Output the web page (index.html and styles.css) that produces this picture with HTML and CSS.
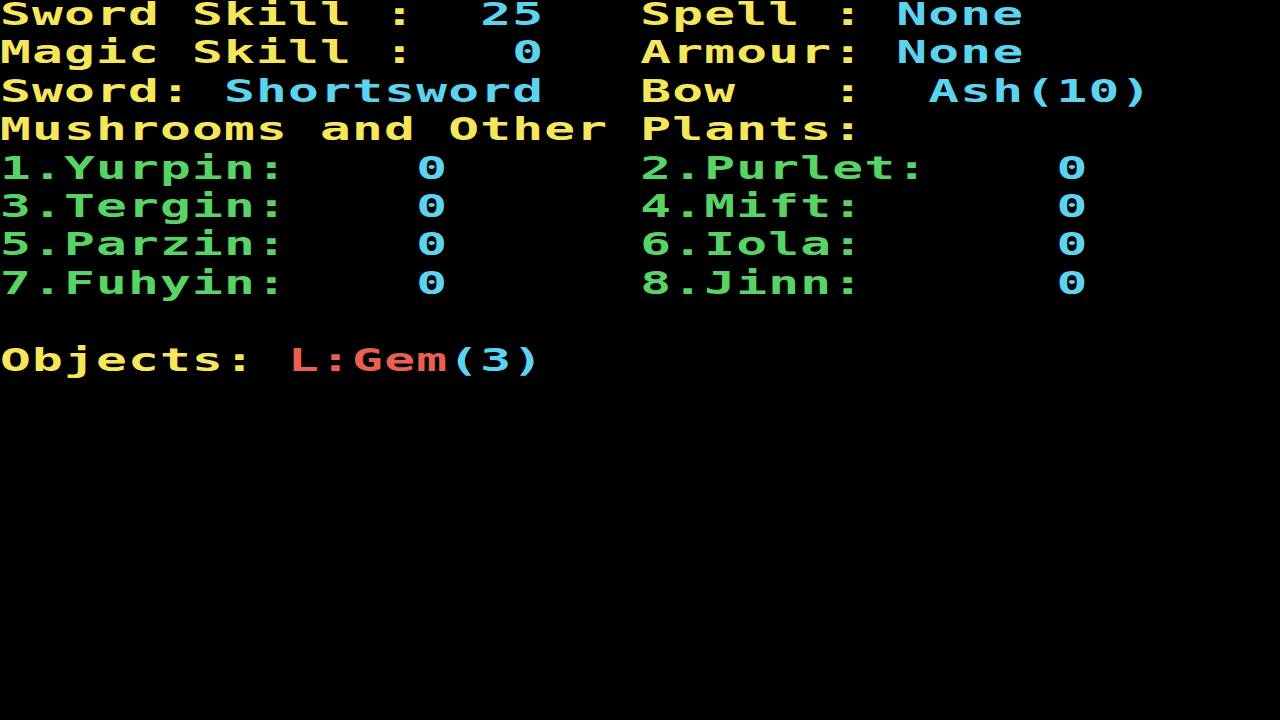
FILE: index.html
```html
<!DOCTYPE html>
<html>
<head>
<meta charset="utf-8">
<link rel="stylesheet" href="styles.css">
</head>
<body>
<div class="screen">
<div class="line"><span class="y">Sword Skill :</span>  <span class="c">25</span>   <span class="y">Spell :</span> <span class="c">None</span></div>
<div class="line"><span class="y">Magic Skill :</span>   <span class="c">0</span>   <span class="y">Armour:</span> <span class="c">None</span></div>
<div class="line"><span class="y">Sword:</span> <span class="c">Shortsword</span>   <span class="y">Bow   :</span>  <span class="c">Ash(10)</span></div>
<div class="line"><span class="y">Mushrooms and Other Plants:</span></div>
<div class="line"><span class="g">1.Yurpin:</span>    <span class="c">0</span>      <span class="g">2.Purlet:</span>    <span class="c">0</span></div>
<div class="line"><span class="g">3.Tergin:</span>    <span class="c">0</span>      <span class="g">4.Mift:</span>      <span class="c">0</span></div>
<div class="line"><span class="g">5.Parzin:</span>    <span class="c">0</span>      <span class="g">6.Iola:</span>      <span class="c">0</span></div>
<div class="line"><span class="g">7.Fuhyin:</span>    <span class="c">0</span>      <span class="g">8.Jinn:</span>      <span class="c">0</span></div>
<div class="line"> </div>
<div class="line"><span class="y">Objects:</span> <span class="r">L:Gem</span><span class="c">(3)</span></div>
</div>
</body>
</html>
```
FILE: styles.css
```css
html, body {
  margin: 0;
  padding: 0;
  background: #000;
  width: 1280px;
  height: 720px;
  overflow: hidden;
}
.screen {
  width: 800px;
  margin-top: -5px;
  transform: scaleX(1.6);
  transform-origin: 0 0;
  font-family: "DejaVu Sans Mono", "Liberation Mono", monospace;
  font-weight: bold;
  font-size: 32px;
  letter-spacing: 0.74px;
}
.line {
  white-space: pre;
  height: 38.4px;
  line-height: 38.4px;
}
.y { color: #f6e65c; }
.c { color: #5cd4f0; }
.g { color: #58d466; }
.r { color: #e8604f; }
```
